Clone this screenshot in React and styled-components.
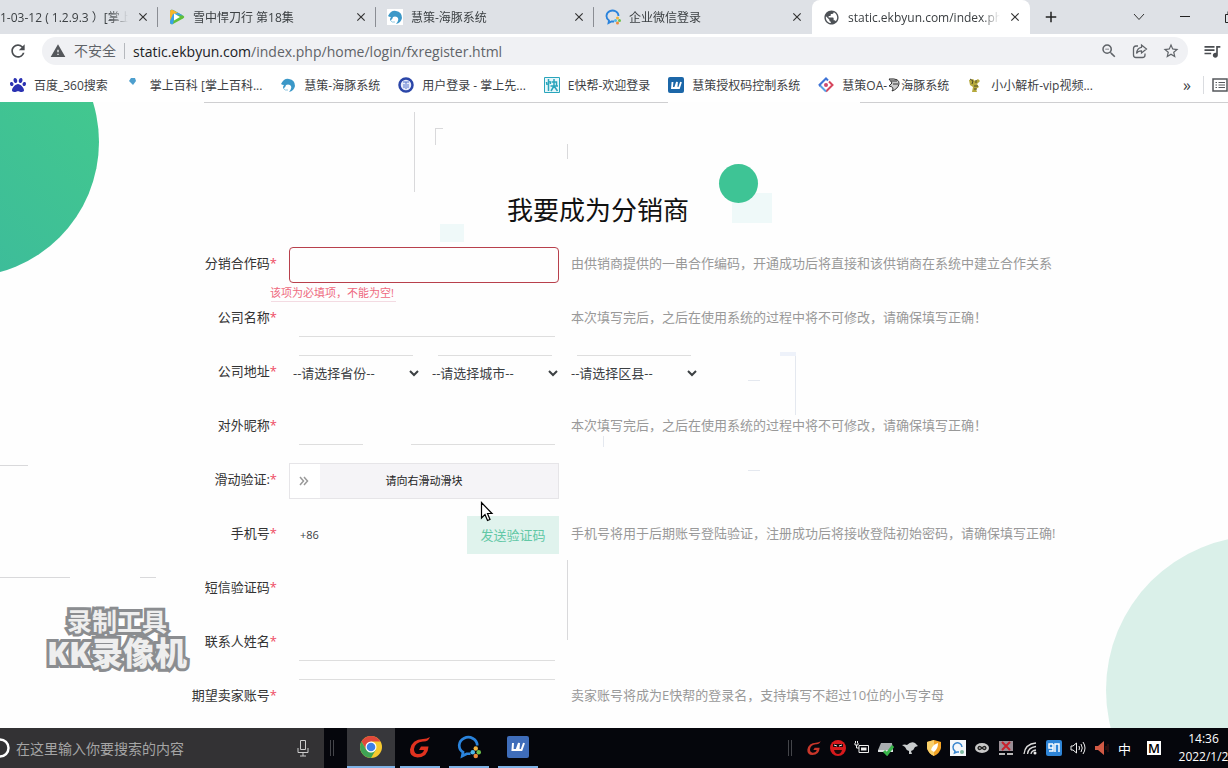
import React from "react";
import styled, { createGlobalStyle } from "styled-components";
import {
  MdClose,
  MdAdd,
  MdPublic,
  MdRefresh,
  MdWarning,
  MdZoomOut,
  MdStarBorder,
  MdQueueMusic,
} from "react-icons/md";
import { FaPaw } from "react-icons/fa";

const tabs = [
  { title: "1-03-12 ( 1.2.9.3 ）[掌上", cut: true, divider: true },
  { title: "雪中悍刀行 第18集", icon: "video", divider: true },
  { title: "慧策-海豚系统", icon: "dolphinBox", divider: true },
  { title: "企业微信登录", icon: "wework" },
  { title: "static.ekbyun.com/index.php", icon: "globe", active: true },
];

const bookmarks = [
  { title: "百度_360搜索", icon: "baidu" },
  { title: "掌上百科 [掌上百科...", icon: "drop" },
  { title: "慧策-海豚系统", icon: "dolphin" },
  { title: "用户登录 - 掌上先...", icon: "badge" },
  { title: "E快帮-欢迎登录", icon: "kuai" },
  { title: "慧策授权码控制系统", icon: "w" },
  { title: "慧策OA-", extra: "海豚系统", icon: "diamond" },
  { title: "小小解析-vip视频...", icon: "bee" },
];

const LOCKED_HINT = "本次填写完后，之后在使用系统的过程中将不可修改，请确保填写正确！";

const GlobalStyle = createGlobalStyle`
  * {
    box-sizing: border-box;
  }

  body {
    margin: 0;
    font-family: "Open Sans", "Noto Sans CJK SC", sans-serif;
    font-size: 12px;
    color: #3c4043;
  }

  button, input, select {
    font: inherit;
    color: inherit;
  }

  svg {
    flex-shrink: 0;
  }
`;

const Screen = styled.div`
  display: flex;
  flex-direction: column;
  height: 100vh;
  overflow: hidden;
`;

const TabBar = styled.div`
  display: flex;
  align-items: center;
  height: 34px;
  background: #dee1e6;
  overflow: hidden;
`;

const TabItem = styled.div`
  display: flex;
  align-items: center;
  gap: 8px;
  flex: 0 1 ${(p) => (p.$cut ? 158 : 218)}px;
  min-width: 0;
  height: 34px;
  padding: 0 8px 0 ${(p) => (p.$cut ? 0 : 11)}px;
  border-radius: 8px 8px 0 0;
  background: ${(p) =>
    p.$divider ? "linear-gradient(#8a8d93, #8a8d93) 100% 50% / 1px 20px no-repeat" : "none"};
  background-color: ${(p) => (p.$active ? "#fff" : "transparent")};
`;

const TabTitle = styled.span`
  flex: 1;
  min-width: 0;
  overflow: hidden;
  white-space: nowrap;
  mask-image: linear-gradient(90deg, #000 calc(100% - 18px), transparent);
`;

const IconButton = styled.button`
  display: flex;
  padding: 0;
  border: 0;
  background: none;
`;

const NewTab = styled(IconButton)`
  padding: 0 12px;
`;

const WindowButtons = styled.div`
  display: flex;
  flex-shrink: 0;
  gap: 34px;
  margin-left: auto;
  margin-right: -9px;
`;

const AddressBar = styled.div`
  display: flex;
  align-items: center;
  gap: 14px;
  height: 34px;
  padding: 0 6px 0 8px;
  background: #fff;
`;

const AddressField = styled.div`
  display: flex;
  align-items: center;
  flex: 1;
  gap: 14px;
  height: 28px;
  padding: 0 8px;
  border-radius: 14px;
  background: #f0f1f4;
  color: #5f6368;
`;

const Location = styled.div`
  display: flex;
  align-items: center;
  flex: 1;
  gap: 8px;
  font-size: 14px;
  white-space: nowrap;
`;

const Insecure = styled.span`
  padding-right: 8px;
  border-right: 1px solid #b5b8bd;
  line-height: 16px;
`;

const Url = styled.span`
  b {
    font-weight: 400;
    color: #202124;
  }
`;

const BookmarkBar = styled.nav`
  display: flex;
  align-items: center;
  gap: 18px;
  height: 34px;
  padding-left: 10px;
  background: #fff;
  overflow: hidden;
`;

const Bookmark = styled.a`
  display: flex;
  align-items: center;
  gap: 8px;
  white-space: nowrap;
  color: inherit;
  text-decoration: none;
`;

const BookmarkText = styled.span`
  display: flex;
  align-items: center;
`;

const BookmarksEnd = styled.div`
  display: flex;
  align-items: center;
  gap: 12px;
  margin-left: auto;
  font-size: 16px;
  line-height: 18px;
`;

const ReadingList = styled.span`
  display: flex;
  padding: 2px 0 2px 8px;
  border-left: 1px solid #dadce0;
`;

const Page = styled.main`
  position: relative;
  flex: 1;
  min-height: 0;
  padding-top: 90px;
  overflow: hidden;
  background: #fefefe;
`;

const LinesSvg = styled.svg`
  position: absolute;
  top: 0;
  left: 0;
`;

const CornerCircle = styled.div`
  position: absolute;
  top: -95px;
  left: -171px;
  width: 270px;
  height: 270px;
  border-radius: 50%;
  background: linear-gradient(45deg, #3cba9c 20%, #42c78f 80%);
`;

const PaleCircle = styled.div`
  position: absolute;
  right: -186px;
  bottom: -116px;
  width: 308px;
  height: 308px;
  border-radius: 50%;
  background: #daf0e9;
`;

const Heading = styled.div`
  display: flex;
  justify-content: center;
  padding-right: 32px;
  margin-bottom: 19px;
`;

const Title = styled.h1`
  position: relative;
  margin: 0;
  font-size: 26px;
  font-weight: 400;
  line-height: 36px;
  color: #111;
`;

const Dot = styled.span`
  position: absolute;
  top: -28px;
  left: calc(100% + 30px);
  width: 39px;
  height: 39px;
  border-radius: 50%;
  background: #3ec495;
`;

const Form = styled.form`
  position: relative;
  display: flex;
  flex-direction: column;
  gap: 18px;
  font-size: 13px;
`;

const Row = styled.div`
  display: grid;
  grid-template-columns: ${(p) => (p.$wide ? "277px 1fr" : "277px 270px 1fr")};
  column-gap: 12px;
  height: 36px;
  line-height: 32px;
`;

const Label = styled.label`
  text-align: right;
  white-space: nowrap;
  color: #333;

  i {
    font-style: normal;
    color: #ee4a62;
  }
`;

const Control = styled.div`
  position: relative;
  height: 36px;
`;

const lines = {
  bottom: "linear-gradient(#dedede, #dedede) 10px 100% / 256px 1px no-repeat",
  top: "linear-gradient(#dedede, #dedede) 10px 0 / 256px 1px no-repeat",
  split: `linear-gradient(#dedede, #dedede) 10px 100% / 64px 1px no-repeat,
    linear-gradient(#dedede, #dedede) 122px 100% / 144px 1px no-repeat`,
};

const Input = styled.input`
  display: block;
  width: 100%;
  height: 36px;
  padding: 0 10px;
  border: ${(p) => (p.$error ? "1px solid #b8404c" : "0")};
  border-radius: ${(p) => (p.$error ? 4 : 0)}px;
  outline: none;
  background: ${(p) => lines[p.$line] || "transparent"};
`;

const ErrorText = styled.span`
  position: absolute;
  top: 38px;
  left: -19px;
  font-size: 11px;
  line-height: 16px;
  white-space: nowrap;
  color: #ee6a80;
`;

const Hint = styled.span`
  white-space: nowrap;
  color: #999;
`;

const Selects = styled.div`
  display: flex;
  gap: 6px;
`;

const Select = styled.select`
  width: 133px;
  height: 36px;
  border: 0;
  background: linear-gradient(#dedede, #dedede) 10px 0 / 114px 1px no-repeat;
`;

const Slider = styled.input`
  appearance: none;
  display: block;
  width: 100%;
  height: 36px;
  margin: 0;
  border: 1px solid #e6e5e8;
  background: #f5f4f7;

  &::-webkit-slider-thumb {
    appearance: none;
    width: 30px;
    height: 34px;
    border: 0;
    background: #fff;
  }
`;

const SliderText = styled.span`
  position: absolute;
  inset: 0;
  font-size: 11px;
  line-height: 36px;
  text-align: center;
  color: #222;
  pointer-events: none;
`;

const SliderArrow = styled.svg`
  position: absolute;
  top: 13px;
  left: 10px;
  pointer-events: none;
`;

const Phone = styled.div`
  display: flex;
  align-items: center;
  height: 36px;
  padding-left: 11px;
  font-size: 11px;
`;

const PhoneInput = styled.input`
  flex: 1;
  min-width: 0;
  border: 0;
  outline: none;
  background: transparent;
`;

const SendCode = styled.button`
  width: 92px;
  height: 38px;
  padding: 0;
  border: 0;
  background: #e0f3ed;
  font-size: 13px;
  color: #62c8a6;
`;

const Watermark = styled.div`
  position: absolute;
  left: 47px;
  top: 503px;
  display: flex;
  flex-direction: column;
  align-items: center;
  font-size: 25px;
  font-weight: 700;
  line-height: 32px;
  color: #eee;
  -webkit-text-stroke: 6px #8b8d90;
  paint-order: stroke fill;

  strong {
    font-size: 32px;
  }
`;

const Cursor = styled.svg`
  position: absolute;
  left: 480px;
  top: 399px;
`;

const TaskbarRow = styled.footer`
  display: flex;
  align-items: center;
  height: 40px;
  flex-shrink: 0;
  background: #05060c;
  color: #fff;
  overflow: hidden;
`;

const Search = styled.div`
  display: flex;
  align-items: center;
  gap: 6px;
  width: 324px;
  height: 40px;
  padding-right: 14px;
  background: #333234;

  input {
    flex: 1;
    padding: 0;
    border: 0;
    outline: none;
    background: none;
    font-size: 14px;
  }

  input::placeholder {
    color: #a5a5a5;
  }
`;

const Grip = styled.span`
  width: 4px;
  height: 16px;
  margin: 0 ${(p) => (p.$tight ? 6 : 13)}px 0 6px;
  border: solid #44454a;
  border-width: 0 1px;
`;

const AppButton = styled.button`
  display: flex;
  align-items: center;
  justify-content: center;
  width: ${(p) => (p.$active ? 48 : 40)}px;
  height: 40px;
  margin-right: ${(p) => (p.$active ? 5 : 9)}px;
  padding: 0;
  border: 0;
  border-bottom: 2px solid #7fb2e6;
  background: ${(p) => (p.$active ? "#37373b" : "transparent")};
`;

const Tray = styled.div`
  display: flex;
  align-items: center;
  gap: 8px;
  margin-left: auto;
  font-size: 13px;
`;

const Ime = styled.span`
  width: 14px;
  margin: 0 10px 0 8px;
  background: #fff;
  color: #000;
  font-weight: 600;
  line-height: 14px;
  text-align: center;
`;

const Clock = styled.div`
  display: flex;
  flex-direction: column;
  align-items: center;
  width: 49px;
  font-size: 12px;
  line-height: 18px;
  white-space: nowrap;
`;

function SiteIcon({ name, size = 16 }) {
  const box = { width: size, height: size, viewBox: "0 0 16 16" };
  switch (name) {
    case "video":
      return (
        <svg {...box}>
          <path d="M1 3Q1 0 4 1L14 6.500Q16.500 8 14 9.500L4 15Q1 16 1 13Z" fill="#5fbf3a" />
          <path d="M1 3Q1 0 4 1L14 6.500L6 6L4 15Q1 16 1 13Z" fill="#3aa0ea" />
          <path d="M1 3Q1 0 4 1L9 4L4 5L1 12Z" fill="#f8b62b" />
          <path d="M5 4.500L11 8L5 11.500Z" fill="#fff" />
        </svg>
      );
    case "dolphin":
    case "dolphinBox":
      return (
        <svg {...box}>
          {name === "dolphinBox" && <path d="M0 0H16V16H0Z" fill="#fff" />}
          <path
            d="M1 7Q4 1 9 2Q15 3 15 9Q14 14 9 15Q13 10 10 8Q8 7 6 8Q5 12 3 11Q3 9 4 8Q2 8 1 7Z"
            fill="#3b98c8"
          />
          <path d="M3 11Q5 14 8 13" fill="none" stroke="#8fc8e2" strokeWidth="1" />
        </svg>
      );
    case "wework":
      return (
        <svg {...box}>
          <path
            d="M13.500 7A6 5.500 0 1 0 4 11.500L3.500 14L6.500 12.500L9 12.500"
            fill="none"
            stroke="#2a83dc"
            strokeWidth="1.800"
          />
          <circle cx="12.500" cy="9" r="1.500" fill="#f2b33d" />
          <circle cx="10.500" cy="11.500" r="1.500" fill="#4fb8e8" />
          <circle cx="14.500" cy="11.500" r="1.500" fill="#6cc04a" />
          <circle cx="12.500" cy="14" r="1.500" fill="#ee8a3a" />
        </svg>
      );
    case "globe":
      return <MdPublic size={size + 1} color="#4d5156" />;
    case "baidu":
      return <FaPaw size={size} color="#2b32b2" />;
    case "drop":
      return (
        <svg {...box}>
          <path d="M5 1L9 1L10 4L7 8L3 4Z" fill="#4d9fce" />
        </svg>
      );
    case "badge":
      return (
        <svg {...box}>
          <circle cx="8" cy="8" r="6.500" fill="#e6ebfa" stroke="#2b46a8" strokeWidth="2.500" />
          <path d="M5 5H11M8 5V12M6 7V11M10 7V11" stroke="#5a78cc" />
        </svg>
      );
    case "kuai":
      return (
        <svg {...box}>
          <path d="M.5.5H15.500V15.500H.5Z" fill="#e8f7fa" stroke="#2aa5bc" />
          <path
            d="M4.500 2V14M2.500 5L3 8M6 4L6.500 7M7.500 5H12.500V9M6.500 9H14M10 2V9L7 14M10 9L13.500 14"
            stroke="#2aa5bc"
            strokeWidth="1.500"
            fill="none"
          />
        </svg>
      );
    case "w":
      return (
        <svg {...box}>
          <rect width="16" height="16" rx="2" fill="#1c67a8" />
          <path d="M4.500 5L4 11H7L9 5L8.500 11H11L13 5" stroke="#fff" strokeWidth="1.800" fill="none" />
        </svg>
      );
    case "diamond":
      return (
        <svg {...box}>
          <path d="M2.500 9.500L1.500 8L8 1.500L10 3.500" stroke="#3f74d6" strokeWidth="2" fill="none" />
          <path d="M11 4.500L14.500 8L8 14.500" stroke="#d6455c" strokeWidth="2" fill="none" />
          <path d="M8 14.500L2.500 9" stroke="#5aa2e6" strokeWidth="2" fill="none" />
          <circle cx="8" cy="8" r="2" fill="#cc4a70" />
        </svg>
      );
    case "bee":
      return (
        <svg {...box}>
          <path d="M2 3L6 2L8 4L11 2L13 4L10 7L12 10L9 12L10 15L5 15L6 10L3 8Z" fill="#b5a93d" />
          <path d="M3 2L6 4L5 7M9 3V6M7 9H11M7 12H10" stroke="#4d4a2a" fill="none" />
        </svg>
      );
    default:
      return null;
  }
}

function Tab({ tab }) {
  return (
    <TabItem $active={tab.active} $cut={tab.cut} $divider={tab.divider}>
      {tab.icon && <SiteIcon name={tab.icon} />}
      <TabTitle>{tab.title}</TabTitle>
      <IconButton aria-label="关闭标签页">
        <MdClose size={14} color="#333" />
      </IconButton>
    </TabItem>
  );
}

function Browser() {
  return (
    <header>
      <TabBar>
        {tabs.map((tab) => (
          <Tab key={tab.title} tab={tab} />
        ))}
        <NewTab aria-label="新标签页">
          <MdAdd size={18} color="#222" />
        </NewTab>
        <WindowButtons>
          <svg width="12" height="12" viewBox="0 0 12 12">
            <path d="M1 3L6 8.500L11 3" stroke="#333" fill="none" />
          </svg>
          <svg width="12" height="12" viewBox="0 0 12 12">
            <path d="M1 5.500H11" stroke="#222" />
          </svg>
          <svg width="12" height="12" viewBox="0 0 12 12">
            <path d="M.5 3.500H8.500V11.500H.5ZM3 3V.5H11.500V9H9" stroke="#222" fill="none" />
          </svg>
        </WindowButtons>
      </TabBar>

      <AddressBar>
        <IconButton aria-label="重新加载">
          <MdRefresh size={20} color="#4a4d51" />
        </IconButton>
        <AddressField>
          <Location>
            <MdWarning size={16} color="#54575b" />
            <Insecure>不安全</Insecure>
            <Url>
              <b>static.ekbyun.com</b>/index.php/home/login/fxregister.html
            </Url>
          </Location>
          <MdZoomOut size={18} />
          <svg width="16" height="16" viewBox="0 0 16 16">
            <path
              d="M6 3H4Q1.500 3 1.500 5.500V12Q1.500 14.500 4 14.500H10.500Q13 14.500 13 12V10.500"
              fill="none"
              stroke="currentColor"
              strokeWidth="1.300"
            />
            <path
              d="M9.500 2L14.500 6L9.500 10V7.800Q6 7.800 4.500 10.500Q5 5 9.500 4.300Z"
              fill="none"
              stroke="currentColor"
              strokeWidth="1.200"
            />
          </svg>
          <MdStarBorder size={18} />
        </AddressField>
        <MdQueueMusic size={20} color="#4a4d51" />
      </AddressBar>

      <BookmarkBar>
        {bookmarks.map((b, i) => (
          <Bookmark href="#" key={i}>
            <SiteIcon name={b.icon} />
            <BookmarkText>
              {b.title}
              {b.extra && (
                <svg width="14" height="14" viewBox="0 0 14 14">
                  <path d="M2 1Q13 0 12 6Q11 11 5 13Q8 9 2 8L5 5Z" fill="#ccc" stroke="#333" />
                  <path d="M4 3H10M6 6H11" stroke="#333" />
                </svg>
              )}
              {b.extra}
            </BookmarkText>
          </Bookmark>
        ))}
        <BookmarksEnd>
          <span>»</span>
          <ReadingList>
            <svg width="16" height="14" viewBox="0 0 16 14">
              <path d="M1 1H15V13H1Z" fill="none" stroke="#55585c" strokeWidth="1.500" />
              <path d="M3.500 4.500H5M6.500 4.500H13M3.500 7H5M6.500 7H13M3.500 9.500H5M6.500 9.500H13" stroke="#55585c" />
            </svg>
          </ReadingList>
        </BookmarksEnd>
      </BookmarkBar>
    </header>
  );
}

function Field({ id, label, hint, line, error, children }) {
  return (
    <Row>
      <Label htmlFor={id}>
        {label}
        <i>*</i>
      </Label>
      <Control>
        {children || <Input id={id} $line={line} $error={!!error} />}
        {error && <ErrorText>{error}</ErrorText>}
      </Control>
      {hint && <Hint>{hint}</Hint>}
    </Row>
  );
}

function RegisterForm() {
  return (
    <Form>
      <Field
        id="code"
        label="分销合作码"
        error="该项为必填项，不能为空!"
        hint="由供销商提供的一串合作编码，开通成功后将直接和该供销商在系统中建立合作关系"
      />
      <Field id="company" label="公司名称" line="bottom" hint={LOCKED_HINT} />
      <Row $wide>
        <Label htmlFor="province">
          公司地址<i>*</i>
        </Label>
        <Selects>
          <Select id="province">
            <option>--请选择省份--</option>
          </Select>
          <Select aria-label="城市">
            <option>--请选择城市--</option>
          </Select>
          <Select aria-label="区县">
            <option>--请选择区县--</option>
          </Select>
        </Selects>
      </Row>
      <Field id="nickname" label="对外昵称" line="split" hint={LOCKED_HINT} />
      <Field id="slide" label="滑动验证:">
        <Slider id="slide" type="range" min="0" max="100" defaultValue="0" />
        <SliderText>请向右滑动滑块</SliderText>
        <SliderArrow width="10" height="10" viewBox="0 0 10 10">
          <path d="M1 1L4.500 5L1 9M5 1L8.500 5L5 9" stroke="#999" strokeWidth="1.500" fill="none" />
        </SliderArrow>
      </Field>
      <Field
        id="phone"
        label="手机号"
        hint="手机号将用于后期账号登陆验证，注册成功后将接收登陆初始密码，请确保填写正确!"
      >
        <Phone>
          <span>+86</span>
          <PhoneInput id="phone" />
          <SendCode type="button">发送验证码</SendCode>
        </Phone>
      </Field>
      <Field id="sms" label="短信验证码" />
      <Field id="contact" label="联系人姓名" line="bottom" />
      <Field
        id="account"
        label="期望卖家账号"
        line="top"
        hint="卖家账号将成为E快帮的登录名，支持填写不超过10位的小写字母"
      />
    </Form>
  );
}

function ChromeLogo() {
  return (
    <svg width="24" height="24" viewBox="0 0 24 24">
      <circle cx="12" cy="12" r="11" fill="#f7c92f" />
      <path d="M2.500 6.500A11 11 0 0 1 21.500 6.500H12L7.200 14.700Z" fill="#e0483b" />
      <path d="M2.500 6.500A11 11 0 0 0 12 23L16.800 14.800L12 17.500L7.200 14.700Z" fill="#3fa455" />
      <circle cx="12" cy="12" r="5.500" fill="#fff" />
      <circle cx="12" cy="12" r="4.300" fill="#3f7fe8" />
    </svg>
  );
}

function GLogo({ size, color = "#e0321f" }) {
  return (
    <svg width={size} height={size} viewBox="0 0 24 24">
      <path
        d="M22 2Q20 7 15 6.500Q7 7 6 14Q6 19 10 19Q15 19 16 15H11L13 11.500H20.500Q20 22 9.500 22.500Q1.500 22 2 14.500Q4 4 15 4Q19 4 22 2Z"
        fill={color}
      />
    </svg>
  );
}

function TrayIcons() {
  const box = { width: 16, height: 16, viewBox: "0 0 16 16" };
  return (
    <>
      <GLogo size={16} color="#c9362a" />
      <svg {...box}>
        <circle cx="8" cy="8" r="8" fill="#d7191c" />
        <path d="M3 4H13V7H3Z" fill="#1a0a0a" />
        <path d="M4 5L7 6M12 5L9 6" stroke="#eee" />
        <path d="M4 10H12Q11 14 8 14Q5 14 4 10Z" fill="#1a0a0a" />
      </svg>
      <svg {...box}>
        <path d="M5 5.500H14.500V12.500H5ZM1 3V5H4V3M2.500 5V8H5M1.500 1V3M3.500 1V3" stroke="#eee" fill="none" />
        <path d="M7 7.500H12.500V10.500H7Z" fill="#eee" />
      </svg>
      <svg {...box}>
        <path d="M3 3H14L15 10H0Z" fill="#a9adb0" />
        <path d="M0 10H15V12H0Z" fill="#dfe2e3" />
        <path d="M6 11L9 14L15 6" stroke="#38b54a" strokeWidth="3" fill="none" />
      </svg>
      <svg {...box}>
        <path d="M0 5Q3 4 5 5Q9 1 13 3L16 6L13 7Q12 10 9 11L10 14H7L7 11Q4 10 3 7Z" fill="#c9cccd" />
      </svg>
      <svg {...box}>
        <path d="M8 0L15 2V8Q14 13 8 16Q2 13 1 8V2Z" fill="#f3a325" />
        <path d="M8 0L1 2V8Q2 13 8 16Z" fill="#f9cf69" />
        <path d="M12 3Q6 5 5 10L8 12Q12 9 12 3Z" fill="#fff" />
      </svg>
      <svg {...box}>
        <path d="M0 0H16V16H0Z" fill="#f4f7fa" />
        <path d="M12 7A4.500 4.500 0 1 0 5 11L4.500 13L7 12H9" stroke="#3b87cf" strokeWidth="1.500" fill="none" />
        <circle cx="12" cy="12" r="2" fill="#7cb9a0" />
      </svg>
      <svg {...box}>
        <ellipse cx="8" cy="8" rx="7" ry="5" fill="#c9c9c9" />
        <path d="M8 8Q5 5 4 8Q5 11 8 8Q11 5 12 8Q11 11 8 8Z" stroke="#222" strokeWidth="1.300" fill="none" />
      </svg>
      <svg {...box}>
        <path d="M1 1H15V11H1Z" fill="#9a8e96" />
        <path d="M4 2L12 10M12 2L4 10" stroke="#c9202c" strokeWidth="2" />
        <path d="M1 13H7V15H1ZM9 13H15V15H9Z" fill="#b9b9b9" />
      </svg>
      <svg {...box}>
        <path
          d="M2 14Q3 4 14 3M5.500 14Q6 7.500 14 6.500M9 14Q9.500 10.500 14 10"
          stroke="#ddd"
          strokeWidth="1.300"
          fill="none"
        />
        <circle cx="13" cy="13" r="1.500" fill="#eee" />
      </svg>
      <svg {...box}>
        <rect width="16" height="16" rx="2" fill="#2f86d8" />
        <path d="M7 4H3V8H7V4V11H3M9 12V4H13V12" stroke="#fff" strokeWidth="1.500" fill="none" />
      </svg>
      <svg {...box}>
        <path
          d="M1 6H3L6.500 3V13L3 10H1ZM9 6Q10 8 9 10M11 4Q13.500 8 11 12M13 2Q17 8 13 14"
          stroke="#eee"
          fill="none"
        />
      </svg>
      <svg {...box}>
        <path d="M1 6H4L10 1V15L4 10H1Z" fill="#d15a45" />
        <path d="M12 6V10M14 4V12" stroke="#4a1712" />
      </svg>
    </>
  );
}

function Taskbar() {
  return (
    <TaskbarRow>
      <Search>
        <svg width="10" height="22" viewBox="0 0 10 22">
          <circle cx="0" cy="11" r="8.500" fill="none" stroke="#fff" strokeWidth="2.500" />
        </svg>
        <input aria-label="搜索" placeholder="在这里输入你要搜索的内容" />
        <svg width="14" height="18" viewBox="0 0 14 18">
          <path d="M4.500 1.500H9.500V10.500H4.500ZM2 9V13.500H12V9M7 13.500V17M4 17H10" stroke="#ccc" fill="none" />
        </svg>
      </Search>
      <Grip />
      <AppButton $active aria-label="Chrome">
        <ChromeLogo />
      </AppButton>
      <AppButton aria-label="G">
        <GLogo size={24} />
      </AppButton>
      <AppButton aria-label="企业微信">
        <SiteIcon name="wework" size={24} />
      </AppButton>
      <AppButton aria-label="慧策">
        <svg width="22" height="22" viewBox="0 0 22 22">
          <rect width="22" height="22" rx="2" fill="#3f6dba" />
          <path d="M6 7L5.500 14H9.500L12 7L11.500 14H14.500L17 7" stroke="#fff" strokeWidth="2" fill="none" />
        </svg>
      </AppButton>
      <Tray>
        <Grip $tight />
        <TrayIcons />
        <span>中</span>
        <Ime>M</Ime>
        <Clock>
          <span>14:36</span>
          <span>2022/1/2</span>
        </Clock>
      </Tray>
    </TaskbarRow>
  );
}

function PageLines() {
  return (
    <LinesSvg width="1228" height="626" viewBox="0 0 1228 626">
      <path d="M204 .5H668M860 .5H1228" stroke="#cfcfd1" />
      <path
        d="M414.500 10V90M567.500 42V57M435.500 43V26M435 26.500H443M567.500 458V538M0 475.500H70M140 475.500H156M0 363.500H28"
        stroke="#d9d9db"
        fill="none"
      />
      <path d="M795.500 250V313M603.500 334V345M748 278.500H760M748 368.500H760" stroke="#e4e8ef" />
      <path d="M732 91H772V121H732ZM440 122H464V140H440Z" fill="#eff9f9" />
      <path d="M780 250H796V254H780Z" fill="#eef2fa" />
      <path d="M271 199.500H396" stroke="#f3dbe2" />
    </LinesSvg>
  );
}

export default function App() {
  return (
    <>
      <GlobalStyle />
      <Screen>
        <Browser />
        <Page>
          <CornerCircle />
          <PaleCircle />
          <PageLines />
          <Heading>
            <Title>
              我要成为分销商
              <Dot />
            </Title>
          </Heading>
          <RegisterForm />
          <Watermark>
            <span>录制工具</span>
            <strong>KK录像机</strong>
          </Watermark>
          <Cursor width="14" height="22" viewBox="0 0 14 22">
            <path
              d="M1.500 1.500V17L5 13.500L7.500 19.500L10 18.500L7.500 12.500H12Z"
              fill="#fff"
              stroke="#000"
              strokeWidth="1.200"
            />
          </Cursor>
        </Page>
        <Taskbar />
      </Screen>
    </>
  );
}
